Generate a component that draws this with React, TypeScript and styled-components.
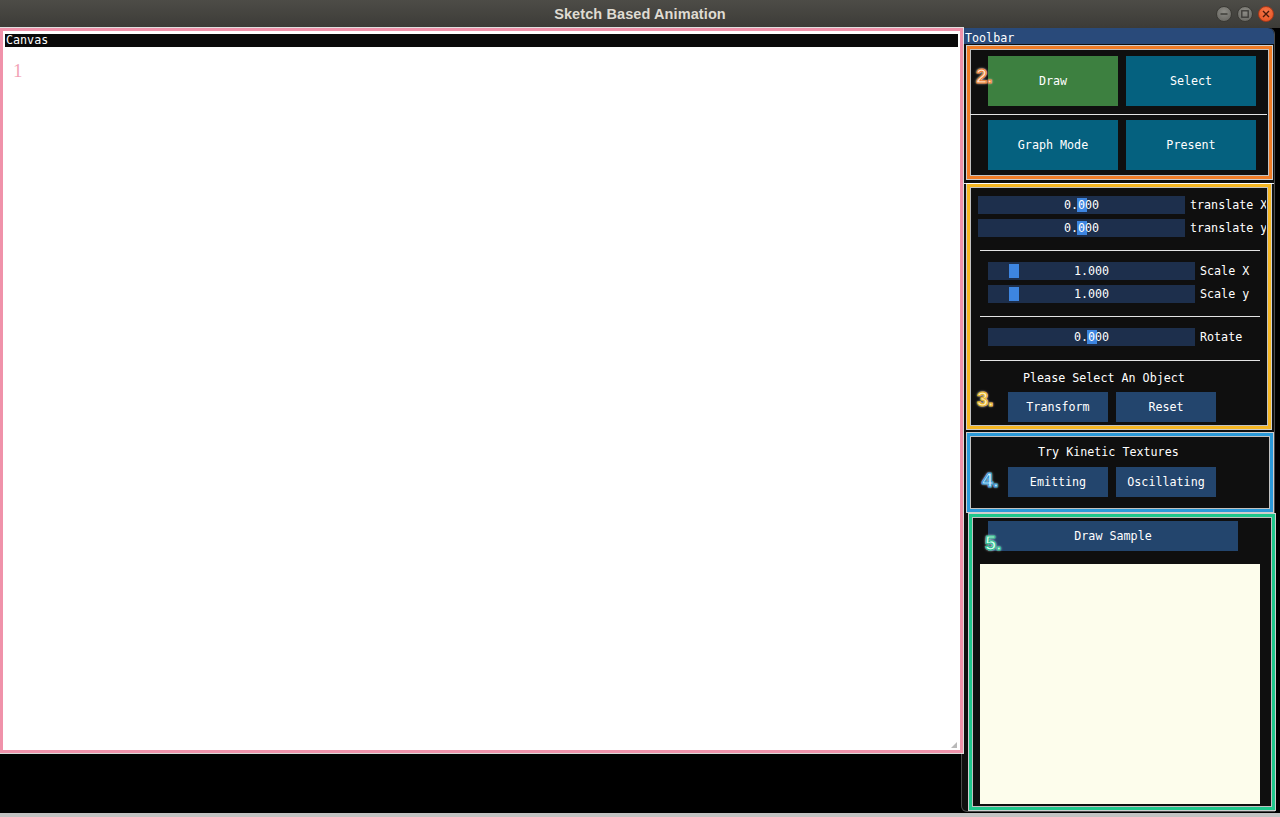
import React from 'react';
import styled, { createGlobalStyle } from 'styled-components';

const Global = createGlobalStyle`
  html, body { margin: 0; padding: 0; background: #000; }
  body { width: 1280px; height: 817px; overflow: hidden; }
  #root { width: 1280px; height: 817px; }
  * { box-sizing: border-box; }
`;

const mono = `"DejaVu Sans Mono", "Liberation Mono", monospace`;

const Screen = styled.div`
  width: 1280px;
  height: 817px;
  display: flex;
  flex-direction: column;
  background: #000;
`;

const TitleBar = styled.div`
  height: 28px;
  flex: none;
  display: grid;
  grid-template-columns: 1fr auto 1fr;
  align-items: center;
  background: linear-gradient(#4d4c47, #3c3b37);
`;

const TitleText = styled.div`
  font: bold 14.5px "Liberation Sans", "DejaVu Sans", sans-serif;
  color: #dfdbd2;
  letter-spacing: 0.1px;
`;

const Controls = styled.div`
  display: flex;
  justify-content: flex-end;
  gap: 5px;
  padding-right: 6px;
`;

const Ctl = styled.div<{ $close?: boolean }>`
  width: 16px;
  height: 16px;
  border-radius: 50%;
  display: flex;
  align-items: center;
  justify-content: center;
  border: 1px solid ${(p) => (p.$close ? '#a8391a' : '#3a3934')};
  background: ${(p) =>
    p.$close
      ? 'radial-gradient(circle at 50% 35%, #f6774a, #e4501f)'
      : 'radial-gradient(circle at 50% 35%, #8d8c86, #62615c)'};
`;

const Main = styled.div`
  height: 785px;
  flex: none;
  display: flex;
`;

const CanvasColumn = styled.div`
  width: 963px;
  flex: none;
  display: flex;
  flex-direction: column;
  position: relative;
  z-index: 2;
`;

const CanvasFrame = styled.div`
  width: 963px;
  height: 725px;
  border: 3px solid #f092aa;
  box-shadow: 0 0 0 1px rgba(255, 255, 255, 0.85), inset 0 0 0 1px rgba(255, 255, 255, 0.9);
  background: #fff;
  padding: 3px 2px 1px 2px;
  display: flex;
  flex-direction: column;
`;

const CanvasTitle = styled.div`
  height: 13px;
  flex: none;
  background: #0a0a0a;
  color: #fff;
  font: 11.7px ${mono};
  line-height: 12px;
  padding-left: 1px;
`;

const CanvasBody = styled.div`
  flex: 1;
  position: relative;
  background: #fff;
`;

const CanvasNumber = styled.div`
  position: absolute;
  left: 8px;
  top: 14px;
  font: 19px "Liberation Serif", serif;
  line-height: 19px;
  color: #f2a2b6;
`;

const Grip = styled.svg`
  position: absolute;
  right: 1px;
  bottom: 1px;
`;

const ToolWindow = styled.div`
  width: 314px;
  height: 784px;
  flex: none;
  display: flex;
  flex-direction: column;
  background: #0f0f0f;
  border: 1px solid #4a4a4a;
  border-top: none;
  border-radius: 0 6px 0 6px;
  margin-left: -2px;
  position: relative;
  z-index: 1;
`;

const ToolTitle = styled.div`
  height: 16px;
  flex: none;
  background: #294a7a;
  color: #fff;
  font: 11.7px ${mono};
  line-height: 13px;
  padding: 4px 0 0 3px;
  border-radius: 0 6px 0 0;
`;

const ToolBody = styled.div`
  display: flex;
  flex-direction: column;
  align-items: flex-start;
`;

const Section = styled.div<{ $c: string; $w: number; $h: number; $ml: number; $mt: number }>`
  position: relative;
  width: ${(p) => p.$w}px;
  height: ${(p) => p.$h}px;
  margin-left: ${(p) => p.$ml}px;
  margin-top: ${(p) => p.$mt}px;
  border: 3px solid ${(p) => p.$c};
  box-shadow: 0 0 0 1px rgba(255, 255, 255, 0.8), inset 0 0 0 1px rgba(255, 255, 255, 0.75);
  background: #0f0f0f;
  display: flex;
  flex-direction: column;
  align-items: flex-start;
  overflow: hidden;
`;

const Label = styled.div<{ $fill: string; $stroke: string; $l: number; $t: number }>`
  position: absolute;
  left: ${(p) => p.$l}px;
  top: ${(p) => p.$t}px;
  font: bold 20px "Liberation Sans", "DejaVu Sans", sans-serif;
  line-height: 20px;
  color: ${(p) => p.$fill};
  -webkit-text-stroke: 1px ${(p) => p.$stroke};
  text-shadow: 0 0 2px #fff, 0 0 3px rgba(255, 255, 255, 0.8);
  z-index: 3;
`;

const BigRow = styled.div<{ $mt: number }>`
  display: flex;
  gap: 8px;
  padding-left: 18px;
  margin-top: ${(p) => p.$mt}px;
`;

const BigButton = styled.div<{ $green?: boolean }>`
  width: 130px;
  height: 50px;
  display: flex;
  align-items: center;
  justify-content: center;
  background: ${(p) => (p.$green ? '#3d8040' : '#05617f')};
  color: #fff;
  font: 11.7px ${mono};
`;

const Rule = styled.div<{ $mt: number; $ml: number; $w: number }>`
  height: 1px;
  flex: none;
  width: ${(p) => p.$w}px;
  margin-left: ${(p) => p.$ml}px;
  margin-top: ${(p) => p.$mt}px;
  background: #e4e4e4;
`;

const SliderRow = styled.div<{ $indent: number; $mt: number }>`
  display: flex;
  align-items: center;
  margin-left: ${(p) => p.$indent}px;
  margin-top: ${(p) => p.$mt}px;
  width: ${(p) => 296 - p.$indent}px;
  overflow: hidden;
  white-space: nowrap;
`;

const SliderFrame = styled.div`
  width: 207px;
  height: 18px;
  flex: none;
  position: relative;
  background: #1d2f4c;
  color: #fff;
  font: 11.7px ${mono};
  line-height: 18px;
  text-align: center;
`;

const Grab = styled.div`
  position: absolute;
  top: 2px;
  width: 10px;
  height: 14px;
  background: #3d85e0;
`;

const SliderValue = styled.span`
  position: relative;
`;

const SliderLabel = styled.span`
  margin-left: 5px;
  color: #fff;
  font: 11.7px ${mono};
`;

const Text = styled.div<{ $pl: number; $mt: number }>`
  padding-left: ${(p) => p.$pl}px;
  margin-top: ${(p) => p.$mt}px;
  height: 14px;
  line-height: 14px;
  color: #fff;
  font: 11.7px ${mono};
  white-space: nowrap;
`;

const SmallRow = styled.div<{ $mt: number; $pl: number }>`
  display: flex;
  gap: 8px;
  margin-top: ${(p) => p.$mt}px;
  padding-left: ${(p) => p.$pl}px;
`;

const SmallButton = styled.div<{ $w?: number }>`
  width: ${(p) => p.$w ?? 100}px;
  height: 30px;
  display: flex;
  align-items: center;
  justify-content: center;
  background: #23456d;
  color: #fff;
  font: 11.7px ${mono};
`;

const SampleCanvas = styled.div`
  width: 280px;
  height: 240px;
  margin-left: 8px;
  margin-top: 13px;
  background: #fdfdec;
`;

const BottomStrip = styled.div`
  height: 4px;
  flex: none;
  background: #c2c2c2;
`;

function Slider({
  value,
  grab,
  label,
  indent,
  mt,
}: {
  value: string;
  grab: number;
  label: string;
  indent: number;
  mt: number;
}) {
  return (
    <SliderRow $indent={indent} $mt={mt}>
      <SliderFrame>
        <Grab style={{ left: grab }} />
        <SliderValue>{value}</SliderValue>
      </SliderFrame>
      <SliderLabel>{label}</SliderLabel>
    </SliderRow>
  );
}

export default function App() {
  return (
    <>
      <Global />
      <Screen>
        <TitleBar>
          <div />
          <TitleText>Sketch Based Animation</TitleText>
          <Controls>
            <Ctl>
              <svg width="8" height="8" viewBox="0 0 8 8">
                <rect x="0.5" y="3.3" width="7" height="1.4" fill="#3a3935" />
              </svg>
            </Ctl>
            <Ctl>
              <svg width="8" height="8" viewBox="0 0 8 8">
                <rect x="0.8" y="0.8" width="6.4" height="6.4" fill="none" stroke="#3a3935" strokeWidth="1.3" />
              </svg>
            </Ctl>
            <Ctl $close>
              <svg width="8" height="8" viewBox="0 0 8 8">
                <path d="M1 1 L7 7 M7 1 L1 7" stroke="#4a1a0a" strokeWidth="1.4" />
              </svg>
            </Ctl>
          </Controls>
        </TitleBar>
        <Main>
          <CanvasColumn>
            <CanvasFrame>
              <CanvasTitle>Canvas</CanvasTitle>
              <CanvasBody>
                <CanvasNumber>1</CanvasNumber>
                <Grip width="6" height="6" viewBox="0 0 6 6">
                  <path d="M6 0 L6 6 L0 6 Z" fill="#b9b9b9" />
                </Grip>
              </CanvasBody>
            </CanvasFrame>
          </CanvasColumn>
          <ToolWindow>
            <ToolTitle>Toolbar</ToolTitle>
            <ToolBody>
              <Section $c="#f07c26" $w={305} $h={133} $ml={5} $mt={2}>
                <Label $fill="#ffe4cc" $stroke="#ef7d2c" $l={6} $t={17}>
                  2.
                </Label>
                <BigRow $mt={7}>
                  <BigButton $green>Draw</BigButton>
                  <BigButton>Select</BigButton>
                </BigRow>
                <Rule $mt={8} $ml={0} $w={297} />
                <BigRow $mt={5}>
                  <BigButton>Graph Mode</BigButton>
                  <BigButton>Present</BigButton>
                </BigRow>
              </Section>
              <Rule $mt={4} $ml={2} $w={310} />
              <Section $c="#f5b622" $w={304} $h={245} $ml={5} $mt={0}>
                <Label $fill="#fff0bd" $stroke="#e6b020" $l={7} $t={202}>
                  3.
                </Label>
                <Slider value="0.000" grab={99} label="translate X" indent={8} mt={9} />
                <Slider value="0.000" grab={99} label="translate y" indent={8} mt={5} />
                <Rule $mt={13} $ml={10} $w={280} />
                <Slider value="1.000" grab={21} label="Scale X" indent={18} mt={11} />
                <Slider value="1.000" grab={21} label="Scale y" indent={18} mt={5} />
                <Rule $mt={13} $ml={10} $w={280} />
                <Slider value="0.000" grab={99} label="Rotate" indent={18} mt={11} />
                <Rule $mt={14} $ml={10} $w={280} />
                <Text $pl={53} $mt={10}>
                  Please Select An Object
                </Text>
                <SmallRow $mt={7} $pl={38}>
                  <SmallButton>Transform</SmallButton>
                  <SmallButton>Reset</SmallButton>
                </SmallRow>
              </Section>
              <Section $c="#2b9ad9" $w={306} $h={79} $ml={5} $mt={4}>
                <Label $fill="#d4eeff" $stroke="#2c98d8" $l={12} $t={34}>
                  4.
                </Label>
                <Text $pl={68} $mt={9}>
                  Try Kinetic Textures
                </Text>
                <SmallRow $mt={8} $pl={38}>
                  <SmallButton>Emitting</SmallButton>
                  <SmallButton>Oscillating</SmallButton>
                </SmallRow>
              </Section>
              <Section $c="#1fc78c" $w={306} $h={296} $ml={7} $mt={2}>
                <Label $fill="#d6fff0" $stroke="#1fbf8a" $l={13} $t={16}>
                  5.
                </Label>
                <SmallRow $mt={4} $pl={16}>
                  <SmallButton $w={250}>Draw Sample</SmallButton>
                </SmallRow>
                <SampleCanvas />
              </Section>
            </ToolBody>
          </ToolWindow>
        </Main>
        <BottomStrip />
      </Screen>
    </>
  );
}
